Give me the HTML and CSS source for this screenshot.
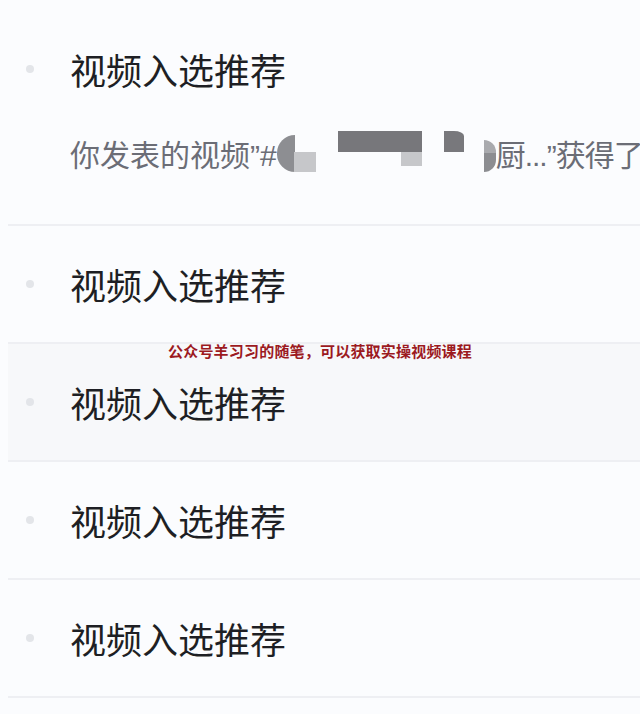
FILE: index.html
```html
<!DOCTYPE html>
<html lang="zh-CN">

<head>
  <meta charset="UTF-8">
  <meta name="viewport" content="width=device-width, initial-scale=1.0">
  <title>消息</title>
  <link rel="stylesheet" href="styles.css">
</head>

<body>
  <div class="page">
    <ul class="notice-list">
      <li class="notice-item first">
        <span class="dot"></span>
        <div class="notice-body">
          <h2 class="notice-title">视频入选推荐</h2>
          <p class="notice-text">
            <span>你发表的视频<span class="q">”#</span></span>
            <span class="redacted">
              <i class="blob half-left"></i>
              <i class="blob sq-light sq-a"></i>
              <i class="blob bar-dark"></i>
              <i class="blob sq-light sq-b"></i>
              <i class="blob tab-dark"></i>
              <i class="blob half-right"></i>
            </span>
            <span class="tail">厨<span class="q">...”</span>获得了</span>
          </p>
        </div>
      </li>
      <li class="notice-item">
        <span class="dot"></span>
        <div class="notice-body">
          <h2 class="notice-title">视频入选推荐</h2>
        </div>
      </li>
      <li class="notice-item shaded">
        <span class="dot"></span>
        <div class="notice-body">
          <h2 class="notice-title">视频入选推荐</h2>
        </div>
      </li>
      <li class="notice-item">
        <span class="dot"></span>
        <div class="notice-body">
          <h2 class="notice-title">视频入选推荐</h2>
        </div>
      </li>
      <li class="notice-item">
        <span class="dot"></span>
        <div class="notice-body">
          <h2 class="notice-title">视频入选推荐</h2>
        </div>
      </li>
    </ul>

    <div class="watermark">公众号羊习习的随笔，可以获取实操视频课程</div>
  </div>
</body>

</html>
```

FILE: styles.css
```css
* {
  margin: 0;
  padding: 0;
  box-sizing: border-box;
}

body {
  font-family: "Noto Sans CJK SC", "Noto Sans", sans-serif;
  background-color: #f7f8fa;
  color: #1e1f24;
}

.page {
  position: relative;
  height: 714px;
  overflow: hidden;
  padding-left: 8px;
  background-color: #fbfcfe;
}

.notice-list {
  list-style: none;
  background-color: #fbfcfe;
}

.notice-item {
  display: flex;
  align-items: flex-start;
  padding: 32px 0;
  border-bottom: 2px solid #eeeff3;
}

.notice-item.first {
  padding: 43px 0 49px;
}

.notice-item.shaded {
  background-color: #f7f8fa;
}

.dot {
  flex: none;
  width: 8px;
  height: 8px;
  margin: 22px 36px 0 18px;
  border-radius: 50%;
  background-color: #e3e5e9;
}

.notice-body {
  flex: 1;
  min-width: 0;
}

.notice-title {
  font-size: 36px;
  font-weight: 400;
  line-height: 52px;
  color: #1e1f24;
}

.notice-text {
  display: flex;
  align-items: center;
  height: 44px;
  margin-top: 36px;
  font-size: 30px;
  line-height: 44px;
  color: #6b6d76;
  white-space: nowrap;
  overflow: hidden;
}

.q {
  font-family: "Liberation Sans", sans-serif;
  line-height: 1;
}

.tail {
  letter-spacing: -1px;
}

.redacted {
  position: relative;
  flex: none;
  width: 223px;
  height: 44px;
  margin-left: -4px;
}

.blob {
  position: absolute;
  display: block;
}

.half-left {
  left: 4px;
  top: 4px;
  width: 18px;
  height: 37px;
  border-radius: 19px 0 0 19px;
  background-color: #8d8e92;
}

.sq-light {
  background-color: #c6c7ca;
}

.sq-a {
  left: 21px;
  top: 21px;
  width: 22px;
  height: 20px;
}

.sq-b {
  left: 128px;
  top: 21px;
  width: 21px;
  height: 14px;
}

.bar-dark {
  left: 65px;
  top: 0;
  width: 84px;
  height: 21px;
  background-color: #77777b;
}

.tab-dark {
  left: 171px;
  top: 0;
  width: 20px;
  height: 21px;
  border-top-right-radius: 10px 5px;
  background-color: #78787c;
}

.half-right {
  left: 211px;
  top: 9px;
  width: 12px;
  height: 32px;
  border-radius: 0 16px 16px 0 / 0 16px 16px 0;
  background: linear-gradient(to bottom, #a9aaae 0%, #a9aaae 40%, #8c8d91 41%);
}

.watermark {
  position: absolute;
  left: 168px;
  top: 342px;
  font-size: 15px;
  font-weight: 700;
  line-height: 18px;
  letter-spacing: 0.2px;
  color: #9c1a1f;
}
```
